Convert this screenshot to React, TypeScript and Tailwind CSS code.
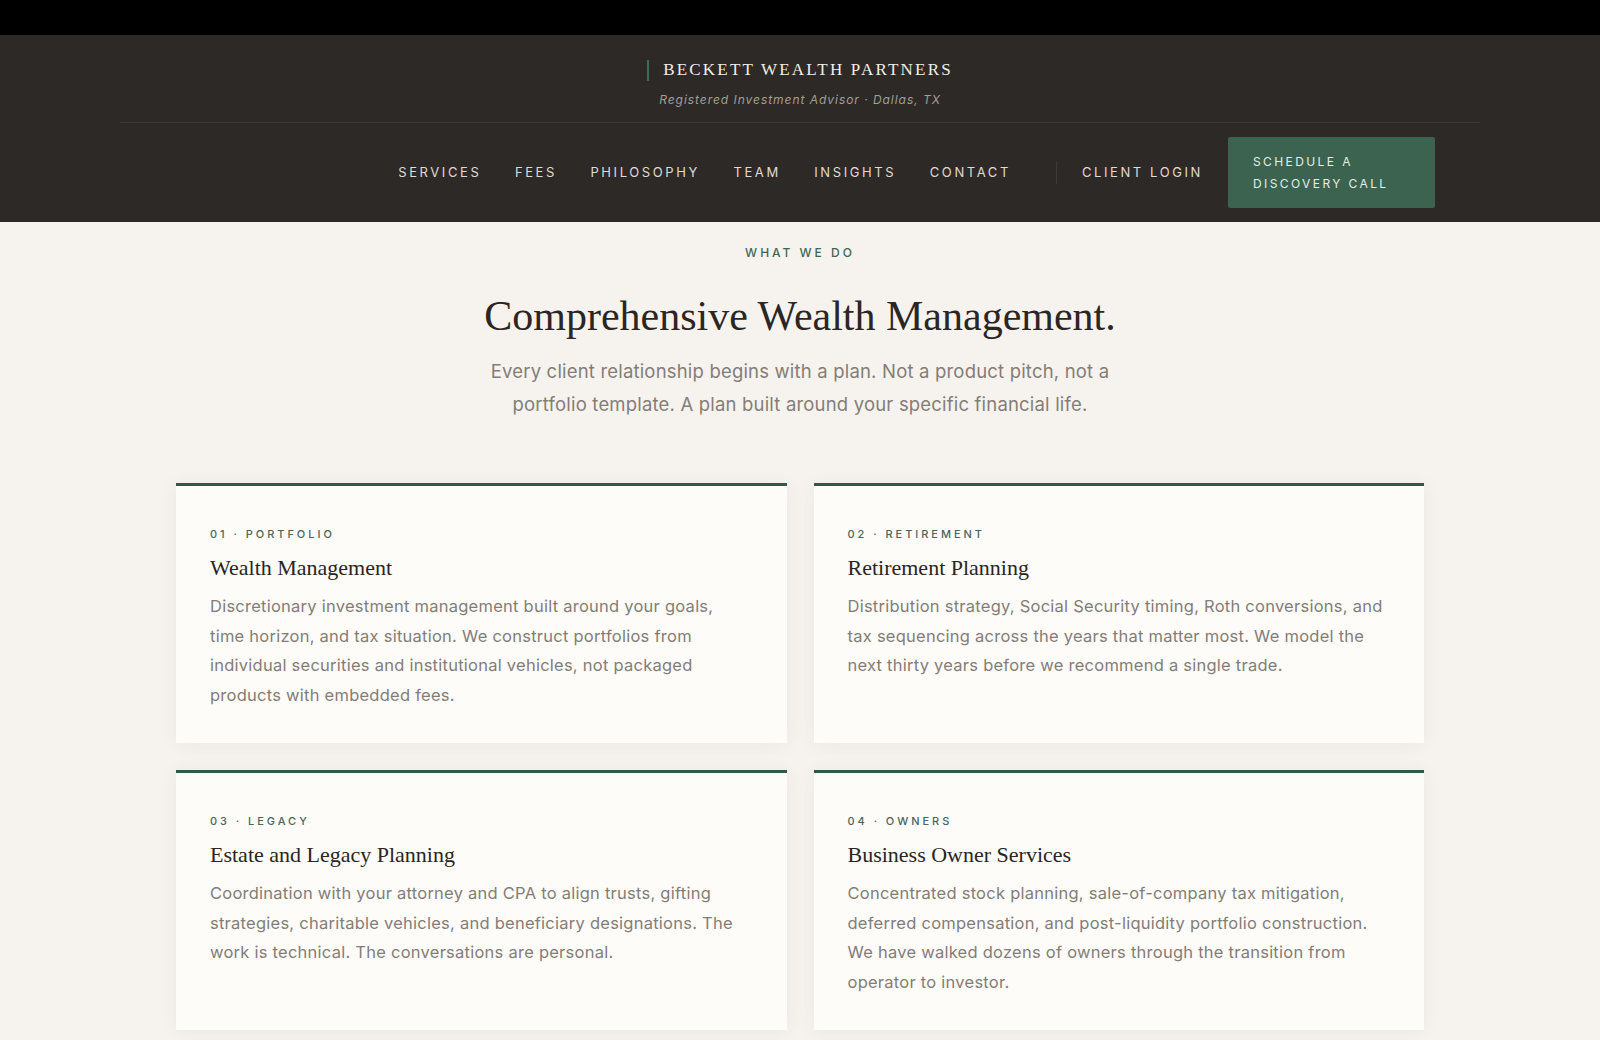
import React from "react";

const NAV = ["Services", "Fees", "Philosophy", "Team", "Insights", "Contact"];

const SERVICES = [
  {
    label: "01 · Portfolio",
    title: "Wealth Management",
    body: "Discretionary investment management built around your goals, time horizon, and tax situation. We construct portfolios from individual securities and institutional vehicles, not packaged products with embedded fees.",
  },
  {
    label: "02 · Retirement",
    title: "Retirement Planning",
    body: "Distribution strategy, Social Security timing, Roth conversions, and tax sequencing across the years that matter most. We model the next thirty years before we recommend a single trade.",
  },
  {
    label: "03 · Legacy",
    title: "Estate and Legacy Planning",
    body: "Coordination with your attorney and CPA to align trusts, gifting strategies, charitable vehicles, and beneficiary designations. The work is technical. The conversations are personal.",
  },
  {
    label: "04 · Owners",
    title: "Business Owner Services",
    body: "Concentrated stock planning, sale-of-company tax mitigation, deferred compensation, and post-liquidity portfolio construction. We have walked dozens of owners through the transition from operator to investor.",
  },
];

const serif = "font-['Liberation_Serif','Times_New_Roman',serif]";
const sans = "font-['Inter','Open_Sans',sans-serif]";

export default function App() {
  return (
    <div className={`min-h-screen bg-[#f6f3ef] ${sans}`}>
      <div className="h-[35px] bg-black" />

      {/* Header */}
      <header className="bg-[#2d2926]">
        <div className="max-w-[1360px] mx-auto">
          <div className="flex flex-col items-center pt-[23px] pb-[14px] border-b border-[#3a3633]">
            <div className="flex items-center gap-[14px]">
              <span className="w-[2px] h-[21px] bg-[#3f6b56]" />
              <span className={`${serif} text-[17px] tracking-[0.13em] text-[#f3efe9] uppercase leading-6`}>
                Beckett Wealth Partners
              </span>
            </div>
            <p className="mt-[10px] text-[12px] italic tracking-[0.08em] text-[#a49d96] leading-4">
              Registered Investment Advisor · Dallas, TX
            </p>
          </div>

          <nav className="flex items-center justify-end px-[45px] py-[14px]">
            <ul className="flex items-center gap-[33.5px]">
              {NAV.map((item) => (
                <li key={item} className="text-[13px] uppercase tracking-[0.2em] text-[#e0dad2]">
                  {item}
                </li>
              ))}
            </ul>
            <span className="ml-[45px] w-px h-[23px] bg-[#3d3935]" />
            <a className="ml-[25px] text-[13px] uppercase tracking-[0.2em] text-[#e0dad2]">Client Login</a>
            <a className="ml-[25px] w-[207px] h-[71px] flex flex-col justify-center px-[25px] rounded-[2px] bg-[#3b6350] text-[12px] leading-[22px] uppercase tracking-[0.2em] text-[#e4eee7]">
              <span>Schedule a</span>
              <span>Discovery Call</span>
            </a>
          </nav>
        </div>
      </header>

      {/* What we do */}
      <main className="pt-[23px] pb-10">
        <div className="text-center">
          <p className="text-[12px] font-medium uppercase tracking-[0.25em] text-[#3f6652] leading-4">What We Do</p>
          <h1 className={`${serif} mt-[29px] text-[42px] leading-[52px] text-[#2b2623]`}>
            Comprehensive Wealth Management.
          </h1>
          <p className="mt-[13px] mx-auto max-w-[660px] text-[18.5px] tracking-[0.01em] leading-[33px] text-[#847d77]">
            Every client relationship begins with a plan. Not a product pitch, not a portfolio template. A plan built
            around your specific financial life.
          </p>
        </div>

        <div className="mt-[62px] max-w-[1248px] mx-auto grid grid-cols-2 gap-[27px]">
          {SERVICES.map((s) => (
            <div
              key={s.label}
              className="bg-[#fdfcf9] border-t-[3px] border-[#30594a] shadow-[0_2px_18px_rgba(60,45,30,0.06)] px-[34px] pt-[40px] pb-[33px]"
            >
              <p className="text-[11px] font-medium uppercase tracking-[0.27em] text-[#4a6559] leading-4">{s.label}</p>
              <h2 className={`${serif} mt-[10px] text-[22px] leading-8 text-[#2a2521]`}>{s.title}</h2>
              <p className="mt-[8px] text-[16.5px] tracking-[0.015em] leading-[29.5px] text-[#847d77]">{s.body}</p>
            </div>
          ))}
        </div>
      </main>
    </div>
  );
}
